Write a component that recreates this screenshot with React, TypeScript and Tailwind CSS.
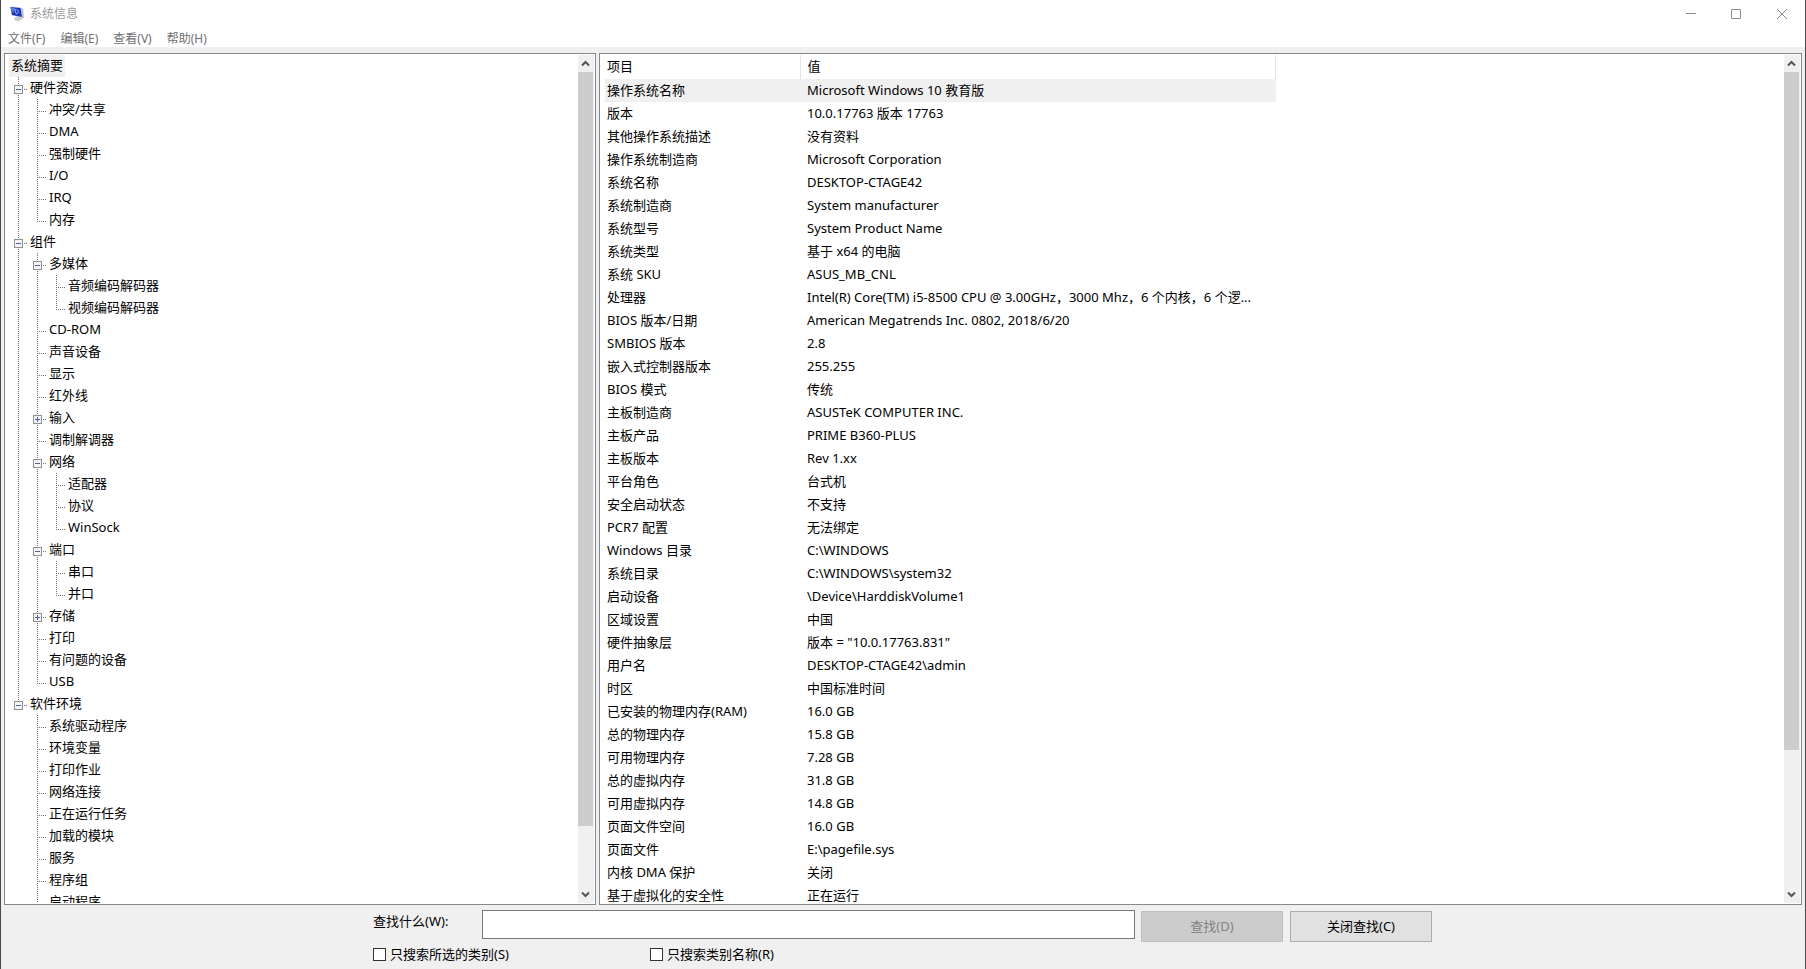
import { useState } from "react";

type Node = { label: string; children?: Node[]; collapsed?: boolean };

const leaf = (label: string): Node => ({ label });

const tree: Node[] = [
  {
    label: "硬件资源",
    children: ["冲突/共享", "DMA", "强制硬件", "I/O", "IRQ", "内存"].map(leaf),
  },
  {
    label: "组件",
    children: [
      { label: "多媒体", children: ["音频编码解码器", "视频编码解码器"].map(leaf) },
      leaf("CD-ROM"),
      leaf("声音设备"),
      leaf("显示"),
      leaf("红外线"),
      { label: "输入", collapsed: true },
      leaf("调制解调器"),
      { label: "网络", children: ["适配器", "协议", "WinSock"].map(leaf) },
      { label: "端口", children: ["串口", "并口"].map(leaf) },
      { label: "存储", collapsed: true },
      leaf("打印"),
      leaf("有问题的设备"),
      leaf("USB"),
    ],
  },
  {
    label: "软件环境",
    children: [
      ...["系统驱动程序", "环境变量", "打印作业", "网络连接", "正在运行任务"].map(leaf),
      ...["加载的模块", "服务", "程序组", "启动程序"].map(leaf),
    ],
  },
];

const rows: [string, string][] = [
  ["操作系统名称", "Microsoft Windows 10 教育版"],
  ["版本", "10.0.17763 版本 17763"],
  ["其他操作系统描述", "没有资料"],
  ["操作系统制造商", "Microsoft Corporation"],
  ["系统名称", "DESKTOP-CTAGE42"],
  ["系统制造商", "System manufacturer"],
  ["系统型号", "System Product Name"],
  ["系统类型", "基于 x64 的电脑"],
  ["系统 SKU", "ASUS_MB_CNL"],
  ["处理器", "Intel(R) Core(TM) i5-8500 CPU @ 3.00GHz，3000 Mhz，6 个内核，6 个逻..."],
  ["BIOS 版本/日期", "American Megatrends Inc. 0802, 2018/6/20"],
  ["SMBIOS 版本", "2.8"],
  ["嵌入式控制器版本", "255.255"],
  ["BIOS 模式", "传统"],
  ["主板制造商", "ASUSTeK COMPUTER INC."],
  ["主板产品", "PRIME B360-PLUS"],
  ["主板版本", "Rev 1.xx"],
  ["平台角色", "台式机"],
  ["安全启动状态", "不支持"],
  ["PCR7 配置", "无法绑定"],
  ["Windows 目录", "C:\\WINDOWS"],
  ["系统目录", "C:\\WINDOWS\\system32"],
  ["启动设备", "\\Device\\HarddiskVolume1"],
  ["区域设置", "中国"],
  ["硬件抽象层", "版本 = \"10.0.17763.831\""],
  ["用户名", "DESKTOP-CTAGE42\\admin"],
  ["时区", "中国标准时间"],
  ["已安装的物理内存(RAM)", "16.0 GB"],
  ["总的物理内存", "15.8 GB"],
  ["可用物理内存", "7.28 GB"],
  ["总的虚拟内存", "31.8 GB"],
  ["可用虚拟内存", "14.8 GB"],
  ["页面文件空间", "16.0 GB"],
  ["页面文件", "E:\\pagefile.sys"],
  ["内核 DMA 保护", "关闭"],
  ["基于虚拟化的安全性", "正在运行"],
];

/** One 19px column of the dotted guide lines to the left of a label. */
function Guide({ kind }: { kind: "through" | "tee" | "corner" | "blank" }) {
  return (
    <svg width="19" height="22" className="shrink-0" shapeRendering="crispEdges" aria-hidden="true">
      {kind !== "blank" && (
        <path
          d={kind === "corner" ? "M9.5 0V13" : "M9.5 0V22"}
          stroke="#707070"
          strokeDasharray="1 1"
          fill="none"
        />
      )}
      {(kind === "tee" || kind === "corner") && (
        <path d="M9 12.5H18" stroke="#707070" strokeDasharray="1 1" fill="none" />
      )}
    </svg>
  );
}

function Toggle({ last, open, onClick, label }: { last: boolean; open: boolean; onClick: () => void; label: string }) {
  return (
    <button type="button" aria-label={label} aria-expanded={open} onClick={onClick} className="shrink-0">
      <svg width="19" height="22" className="block" shapeRendering="crispEdges" aria-hidden="true">
        <path d={last ? "M9.5 0V12" : "M9.5 0V22"} stroke="#707070" strokeDasharray="1 1" />
        <path d="M9 12.5H19" stroke="#707070" strokeDasharray="1 1" />
        <rect x="5.5" y="8.5" width="8" height="8" fill="#f4f4f4" stroke="#919191" />
        <path d="M7 12.5H12" stroke="#4b63a7" />
        {!open && <path d="M9.5 10V15" stroke="#4b63a7" />}
      </svg>
    </button>
  );
}

function TreeItem({ node, last, trail }: { node: Node; last: boolean; trail: boolean[] }) {
  const [open, setOpen] = useState(!node.collapsed);
  const branch = Boolean(node.children) || node.collapsed;
  return (
    <li>
      <div className="flex h-[22px] items-start">
        {trail.map((more, i) => (
          <Guide key={i} kind={more ? "through" : "blank"} />
        ))}
        {branch ? (
          <Toggle last={last} open={open} onClick={() => setOpen(!open)} label={node.label} />
        ) : (
          <Guide kind={last ? "corner" : "tee"} />
        )}
        <span className="px-0.5 leading-5 whitespace-nowrap">{node.label}</span>
      </div>
      {open && node.children && (
        <ul>
          {node.children.map((child, i) => (
            <TreeItem
              key={child.label}
              node={child}
              last={i === node.children!.length - 1 && child.label !== "启动程序"}
              trail={[...trail, !last]}
            />
          ))}
        </ul>
      )}
    </li>
  );
}

function Arrow({ down }: { down?: boolean }) {
  return (
    <button type="button" aria-label={down ? "向下滚动" : "向上滚动"} className="flex h-[17px] w-[15px] shrink-0 items-center justify-center">
      <svg width="9" height="7" viewBox="0 0 9 7" aria-hidden="true">
        <path d={down ? "M1 1.500L4.500 5L8 1.500" : "M1 5.500L4.500 2L8 5.500"} stroke="#555" strokeWidth="2" fill="none" />
      </svg>
    </button>
  );
}

function ScrollBar({ thumb }: { thumb: string }) {
  return (
    <div className="flex w-4 shrink-0 flex-col bg-[#f0f0f0]">
      <Arrow />
      <div className="min-h-0 flex-1">
        <div className={`w-[15px] bg-[#cdcdcd] ${thumb}`} />
      </div>
      <Arrow down />
    </div>
  );
}

const panel = "flex min-h-0 min-w-0 border border-[#828790] bg-white p-px";
const scroller = "min-w-0 flex-1 overflow-auto [scrollbar-width:none]";

export default function App() {
  return (
    <div
      lang="zh-CN"
      className="flex h-screen flex-col overflow-hidden border-x border-[#4a4a4a] bg-[#f0f0f0] font-['Noto_Sans','Noto_Sans_CJK_SC',sans-serif] text-[13px] text-black"
    >
      <header className="bg-white text-[12px]">
        <div className="flex h-7 items-center justify-between">
          <div className="flex items-center gap-1 pl-2 text-[#999]">
            <svg width="17" height="16" viewBox="0 0 17 16" aria-hidden="true">
              <path d="M5 12L9 10L14 13L9 15.500L6 14.500Z" fill="#c9cbce" />
              <path d="M11.500 1.500L14 3L15 12L12 12.500Z" fill="#b4bac6" />
              <path d="M1 .5L12 1.500L13.500 11.500L2.500 9.500Z" fill="#d3daea" />
              <path d="M1.500 1L11.500 2L13 11L3 9Z" fill="#2038b8" />
              <path d="M2 1.500L6 2L5 5L3 7Z" fill="#5b7ce0" />
              <path d="M7 3C5.500 4.500 6 7 8 8M8 3.500C9.500 5 9.500 6.500 8.500 7.500" stroke="#a9c2f5" fill="none" />
            </svg>
            <h1>系统信息</h1>
          </div>
          <div className="flex text-[#8c8c8c]">
            <button type="button" aria-label="最小化" className="flex h-7 w-[45px] items-center justify-center">
              <svg width="10" height="10" aria-hidden="true"><path d="M0 4.500H10" stroke="currentColor" /></svg>
            </button>
            <button type="button" aria-label="最大化" className="flex h-7 w-[45px] items-center justify-center">
              <svg width="10" height="10" aria-hidden="true"><path d="M.5 .5H9.500V9.500H.5Z" stroke="currentColor" fill="none" /></svg>
            </button>
            <button type="button" aria-label="关闭" className="flex h-7 w-[47px] items-center justify-center">
              <svg width="10" height="10" aria-hidden="true"><path d="M0 0L10 10M10 0L0 10" stroke="currentColor" /></svg>
            </button>
          </div>
        </div>
        <nav className="flex h-[19px] items-start gap-[15px] pl-[7px] leading-[22px] text-[#707070]">
          {["文件(F)", "编辑(E)", "查看(V)", "帮助(H)"].map((item) => (
            <button type="button" key={item}>{item}</button>
          ))}
        </nav>
      </header>

      <main className="grid min-h-0 flex-1 grid-cols-[592fr_1203fr] grid-rows-[minmax(0,1fr)] gap-[3px] px-[3px] pt-1.5">
        <section className={panel}>
          <div className={scroller}>
            <div className="pl-[3px]">
              <span className="inline-block h-[22px] bg-[#f0f0f0] px-0.5 align-top leading-5">系统摘要</span>
              <ul>
                {tree.map((node, i) => (
                  <TreeItem key={node.label} node={node} last={i === tree.length - 1} trail={[]} />
                ))}
              </ul>
            </div>
          </div>
          <ScrollBar thumb="h-[92.6%]" />
        </section>

        <section className={panel}>
          <div className={scroller}>
            <table className="ml-1 w-[671px] table-fixed border-collapse text-left whitespace-nowrap">
              <colgroup>
                <col className="w-[195px]" />
                <col />
              </colgroup>
              <thead>
                <tr className="h-6">
                  <th className="border-r border-[#e5e5e5] p-0 pb-0.5 pl-0.5 leading-[22px] font-normal">项目</th>
                  <th className="border-r border-[#e5e5e5] p-0 pb-0.5 pl-[7px] leading-[22px] font-normal">值</th>
                </tr>
              </thead>
              <tbody>
                {rows.map(([name, value], i) => (
                  <tr key={name} className={i === 0 ? "h-[23px] bg-[#f0f0f0]" : "h-[23px]"}>
                    <td className="p-0 pl-0.5 leading-[23px]">{name}</td>
                    <td className="p-0 pl-[7px] leading-[23px]">{value}</td>
                  </tr>
                ))}
              </tbody>
            </table>
          </div>
          <ScrollBar thumb="h-[83.3%]" />
        </section>
      </main>

      <form className="flex h-16 shrink-0 justify-center pt-[5px] pr-px" onSubmit={(e) => e.preventDefault()}>
        <div className="flex w-[762px] flex-col gap-1">
          <div className="flex">
            <label htmlFor="query" className="w-[109px] leading-[22px]">查找什么(W):</label>
            <input id="query" type="text" className="h-[29px] min-w-0 flex-1 border border-[#7a7a7a] bg-white px-1 outline-none" />
          </div>
          <div className="flex leading-[22px]">
            <label className="flex w-[277px] items-center gap-1">
              <input type="checkbox" className="size-[13px] appearance-none border border-[#333] bg-white checked:bg-[#333]" />
              只搜索所选的类别(S)
            </label>
            <label className="flex items-center gap-1">
              <input type="checkbox" className="size-[13px] appearance-none border border-[#333] bg-white checked:bg-[#333]" />
              只搜索类别名称(R)
            </label>
          </div>
        </div>
        <div className="flex gap-[7px] pt-px pl-1.5">
          <button type="submit" disabled className="h-[31px] w-[142px] border border-[#bfbfbf] bg-[#ccc] text-[#838383]">查找(D)</button>
          <button type="button" className="h-[31px] w-[142px] border border-[#adadad] bg-[#e1e1e1]">关闭查找(C)</button>
        </div>
      </form>
    </div>
  );
}
